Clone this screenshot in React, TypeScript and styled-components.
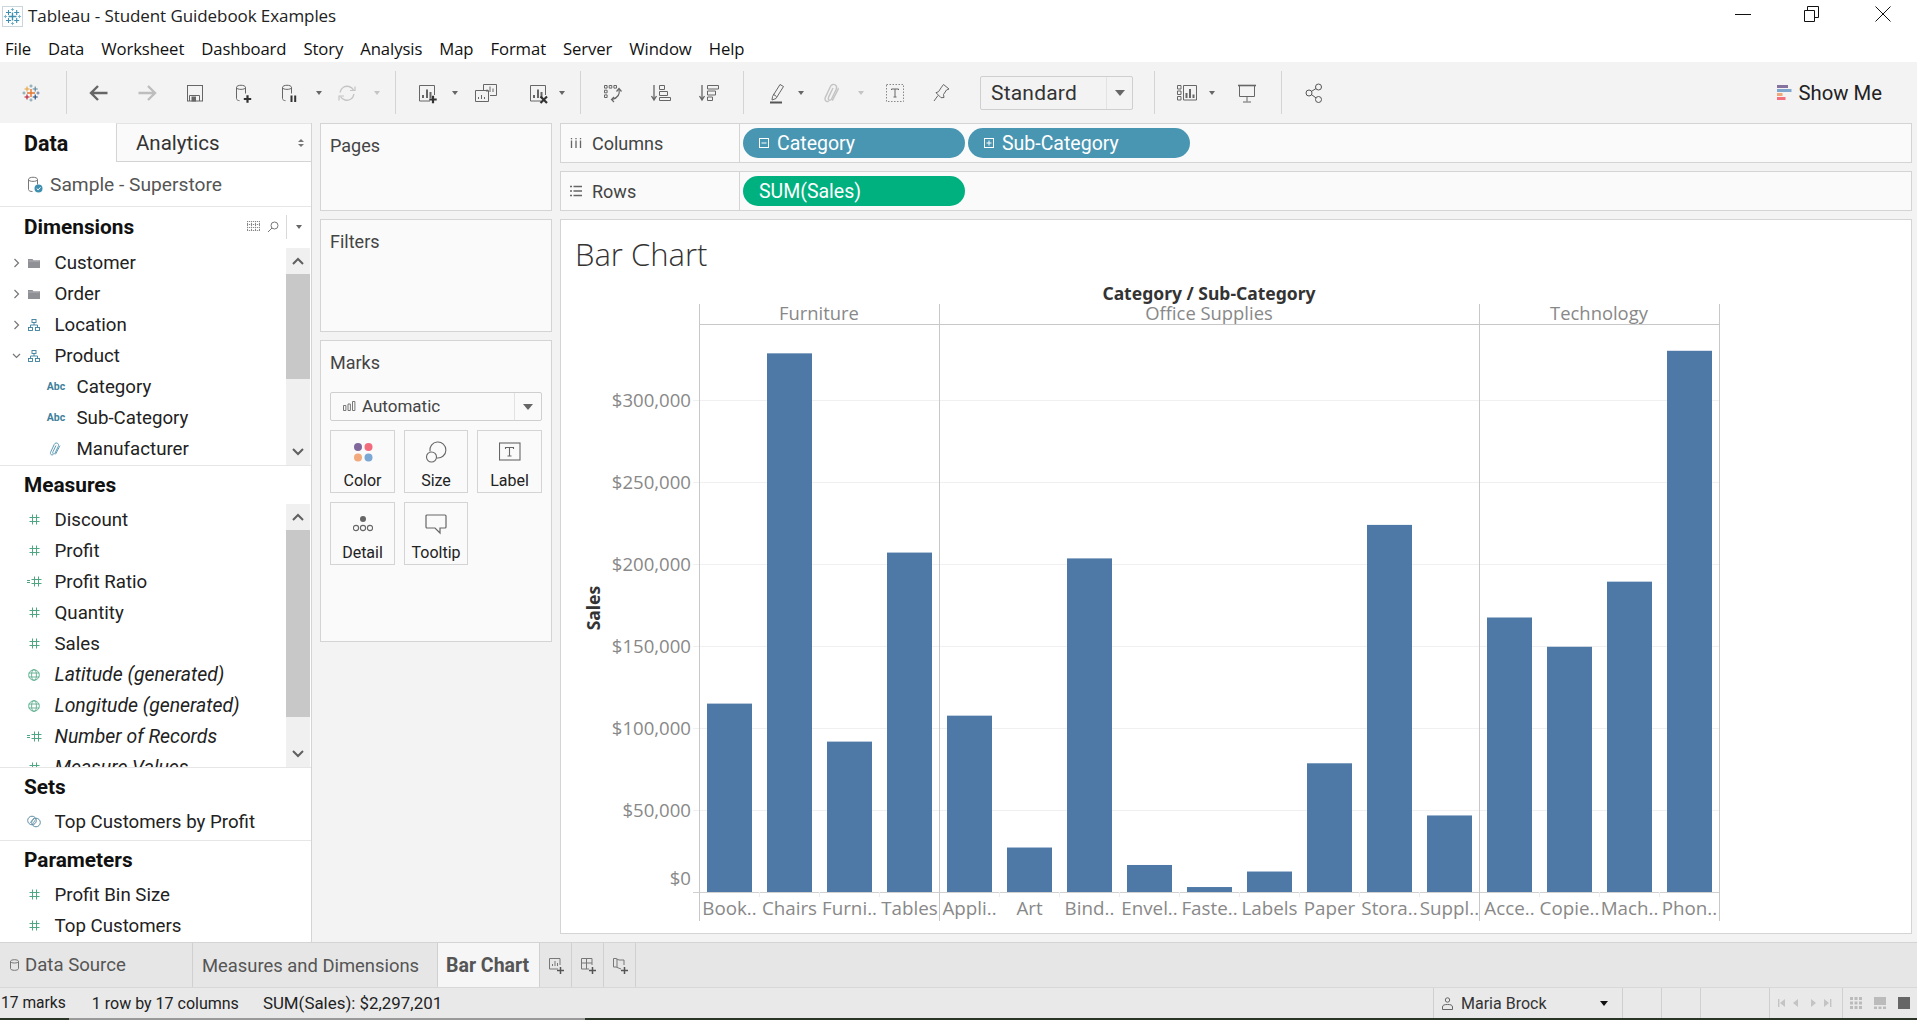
import React from "react";
import styled, { createGlobalStyle } from "styled-components";

const UI = `Roboto, "Liberation Sans", sans-serif`;

const Global = createGlobalStyle`
  html, body { margin: 0; padding: 0; background: #fff; overflow: hidden; }
  * { box-sizing: border-box; }
  #root { width: 1917px; height: 1020px; }
  body { font-family: ${UI}; color: #222; }
`;

const Page = styled.div`
  width: 1917px; height: 1020px; display: flex; flex-direction: column; background: #f3f3f3; overflow: hidden;
`;

/* ---------- title + menu ---------- */
const TitleBar = styled.div`
  height: 32px; background: #fff; display: flex; align-items: center; padding-left: 2px; flex: none;
`;
const TitleText = styled.span`
  font: 400 17px "Open Sans", sans-serif; color: #222; margin: -2px 0 0 5px; letter-spacing: -0.08px;
`;
const WinControls = styled.div`
  margin-left: auto; display: flex; align-items: center; margin-right: 25px; margin-top: -4px;
`;
const WinBtn = styled.svg<{ $gap: number }>`
  width: 18px; height: 18px; margin-left: ${(p) => p.$gap}px; display: block;
`;
const MenuBar = styled.div`
  height: 30px; background: #fff; display: flex; align-items: center; gap: 17px; padding-left: 5px; flex: none;
`;
const MenuItem = styled.span`
  font: 400 16.7px "Open Sans", sans-serif; color: #111; letter-spacing: -0.1px; margin-top: 2px;
`;

/* ---------- toolbar ---------- */
const Toolbar = styled.div`
  height: 61px; flex: none; display: flex; align-items: center; background: #f3f3f3;
`;
const Tool = styled.div<{ $gap: number; $w?: number }>`
  width: ${(p) => p.$w ?? 24}px; height: 24px; margin-left: ${(p) => p.$gap}px; flex: none;
  display: flex; align-items: center; justify-content: center;
`;
const ToolSep = styled.div<{ $gap: number }>`
  width: 1px; height: 43px; background: #d4d4d4; margin-left: ${(p) => p.$gap}px; flex: none;
`;
const Arrow = styled.div<{ $light?: boolean }>`
  width: 0; height: 0; border-left: 3.5px solid transparent; border-right: 3.5px solid transparent;
  border-top: 4px solid ${(p) => (p.$light ? "#c4c4c4" : "#666")};
`;
const FitSelect = styled.div<{ $gap: number }>`
  width: 153px; height: 34px; margin-left: ${(p) => p.$gap}px; border: 1px solid #cfcfcf; border-radius: 2px;
  display: flex; align-items: center; flex: none;
`;
const FitText = styled.span`
  flex: 1; padding-left: 10px; font: 400 21px ${UI}; color: #333; letter-spacing: 0.2px;
`;
const FitArrow = styled.div`
  width: 26px; height: 100%; border-left: 1px solid #e2e2e2; display: flex; align-items: center; justify-content: center;
`;
const BigArrow = styled.div`
  width: 0; height: 0; border-left: 5px solid transparent; border-right: 5px solid transparent; border-top: 6px solid #666;
`;
const ShowMe = styled.div`
  margin-left: auto; margin-right: 35px; display: flex; align-items: center; gap: 6px;
`;
const ShowMeText = styled.span`
  font: 400 20.3px ${UI}; color: #222;
`;

/* ---------- main ---------- */
const Main = styled.div`
  flex: 1; min-height: 0; display: flex;
`;
const Sidebar = styled.div`
  width: 312px; flex: none; background: #fff; border-right: 1px solid #d4d4d4; display: flex; flex-direction: column;
`;
const DataTabs = styled.div`
  height: 39px; display: flex; flex: none;
`;
const DataTab = styled.div`
  width: 116px; padding: 2px 0 0 24px; display: flex; align-items: center; font: 700 21.5px ${UI}; color: #111;
`;
const AnalyticsTab = styled.div`
  flex: 1; display: flex; align-items: center; padding: 1px 0 0 19px; background: #fafafa;
  border-left: 1px solid #d4d4d4; border-bottom: 1px solid #d4d4d4; border-top: 1px solid #e4e4e4;
  font: 400 20.5px ${UI}; color: #333;
`;
const TabSort = styled.span`
  margin-left: auto; margin-right: 7px; display: flex; flex-direction: column; gap: 2px;
`;
const TinyUp = styled.i`
  display: block; width: 0; height: 0; border-left: 3px solid transparent; border-right: 3px solid transparent; border-bottom: 3px solid #777;
`;
const TinyDown = styled.i`
  display: block; width: 0; height: 0; border-left: 3px solid transparent; border-right: 3px solid transparent; border-top: 3px solid #777;
`;
const SourceRow = styled.div`
  height: 45px; display: flex; align-items: center; padding: 0 0 0 27px; gap: 7px; flex: none;
  border-bottom: 1px solid #e6e6e6; font: 400 19.2px ${UI}; color: #555;
`;
const Section = styled.div<{ $h: number; $last?: boolean }>`
  height: ${(p) => p.$h}px; flex: none; display: flex; flex-direction: column;
  border-bottom: ${(p) => (p.$last ? "none" : "1px solid #e6e6e6")};
`;
const SectionHead = styled.div<{ $h: number; $lift?: number }>`
  height: ${(p) => p.$h}px; flex: none; display: flex; align-items: center; padding: 0 0 ${(p) => p.$lift ?? 0}px 24px;
  font: 700 20.8px ${UI}; color: #111;
`;
const HeadTools = styled.div`
  margin-left: auto; display: flex; align-items: center; height: 24px; margin-right: 0;
`;
const HeadIcon = styled.div`
  width: 20px; display: flex; justify-content: center;
`;
const HeadSep = styled.div`
  width: 1px; height: 24px; background: #d9d9d9; margin: 0 9px 0 3px;
`;
const HeadArrow = styled.div`
  width: 0; height: 0; border-left: 3.5px solid transparent; border-right: 3.5px solid transparent; border-top: 4px solid #666; margin-right: 9px;
`;
const ScrollArea = styled.div`
  flex: 1; min-height: 0; display: flex;
`;
const FieldList = styled.div`
  flex: 1; min-width: 0; overflow: hidden;
`;
const Field = styled.div<{ $indent: number; $lift?: number }>`
  height: 31px; display: flex; align-items: center; padding: 0 0 ${(p) => p.$lift ?? 0}px ${(p) => p.$indent}px; white-space: nowrap;
`;
const ChevSlot = styled.span`
  width: 12px; flex: none; display: flex; justify-content: center;
`;
const TypeSlot = styled.span`
  width: 24px; flex: none; display: flex; justify-content: center; align-items: center;
`;
const AbcIcon = styled.span`
  font: 700 10.5px ${UI}; color: #3d7f9c;
`;
const FieldText = styled.span<{ $italic?: boolean }>`
  margin-left: 8.5px; font: ${(p) => (p.$italic ? "italic 400 19.4px" : "normal 400 18.7px")} ${UI}; color: #222;
`;
const ScrollBar = styled.div`
  width: 24px; margin-right: 1px; flex: none; background: #f0f0f0; display: flex; flex-direction: column;
`;
const ScrollBtn = styled.div`
  height: 26px; flex: none; display: flex; align-items: center; justify-content: center;
`;
const Thumb = styled.div<{ $h: number }>`
  height: ${(p) => p.$h}px; background: #c8c8c8; flex: none;
`;
const ScrollEnd = styled(ScrollBtn)`
  margin-top: auto;
`;

const MidCol = styled.div`
  width: 232px; margin-left: 8px; flex: none; display: flex; flex-direction: column; gap: 8px;
`;
const Card = styled.div<{ $h: number }>`
  height: ${(p) => p.$h}px; flex: none; background: #fafafa; border: 1px solid #d4d4d4; padding: 11px 9px 0 9px;
`;
const CardTitle = styled.div`
  font: 400 18px ${UI}; color: #444; line-height: 22px;
`;
const MarkSelect = styled.div`
  height: 29px; margin-top: 18px; border: 1px solid #cfcfcf; border-radius: 2px; display: flex; align-items: center; background: #fafafa;
`;
const MarkSelectText = styled.span`
  flex: 1; display: flex; align-items: center; gap: 6px; padding: 0 0 1px 12px; font: 400 17px ${UI}; color: #444;
`;
const MarkArrow = styled.div`
  width: 27px; height: 100%; border-left: 1px solid #e2e2e2; display: flex; align-items: center; justify-content: center;
`;
const TileGrid = styled.div`
  margin-top: 9px; display: grid; grid-template-columns: 65px 64px 65px; grid-auto-rows: 63px; column-gap: 9px; row-gap: 9px;
`;
const Tile = styled.div`
  border: 1px solid #d4d4d4; display: flex; flex-direction: column; align-items: center; padding-top: 9px;
`;
const TileIcon = styled.div`
  height: 24px; display: flex; align-items: center; justify-content: center;
`;
const TileLabel = styled.div`
  margin-top: 7px; font: 400 16px ${UI}; color: #222;
`;

const RightCol = styled.div`
  width: 1352px; margin-left: 8px; flex: none; display: flex; flex-direction: column; gap: 8px; padding-bottom: 8px;
`;
const Shelf = styled.div`
  height: 40px; flex: none; background: #fafafa; border: 1px solid #d4d4d4; display: flex; align-items: center;
`;
const ShelfLabel = styled.div`
  width: 179px; height: 100%; flex: none; border-right: 1px solid #d4d4d4; display: flex; align-items: center; padding-left: 9px; gap: 10px;
  font: 400 18px ${UI}; color: #444;
`;
const ShelfPills = styled.div`
  display: flex; gap: 3px; margin-left: 3px;
`;
const Pill = styled.div<{ $color: string; $pad: number }>`
  width: 222px; height: 30px; border-radius: 15px; background: ${(p) => p.$color}; color: #fff; display: flex; align-items: center;
  padding-left: ${(p) => p.$pad}px; gap: 8px; font: 400 19.5px ${UI};
`;
const CanvasCard = styled.div`
  flex: 1; min-height: 0; background: #fff; border: 1px solid #d4d4d4; display: flex; flex-direction: column;
`;
const SheetTitle = styled.div`
  height: 52px; flex: none; padding: 16px 0 0 14px; display: flex; align-items: center; font: 300 31px "Open Sans", sans-serif; color: #333;
`;
const ChartSvg = styled.svg`
  display: block; flex: none;
`;
const AxisText = styled.text`
  font: 400 18.6px "Open Sans", sans-serif; fill: #888;
`;
const HeaderText = styled.text`
  font: 400 18.4px "Open Sans", sans-serif; fill: #888;
`;
const SubText = styled.text`
  font: 400 18.8px "Open Sans", sans-serif; fill: #888;
`;
const BoldText = styled.text`
  font: 700 17.5px "Noto Sans", sans-serif; fill: #333;
`;

/* ---------- bottom ---------- */
const TabBar = styled.div`
  height: 45px; flex: none; background: #e6e6e6; border-top: 1px solid #d4d4d4; display: flex;
`;
const SheetTab = styled.div<{ $w: number; $pad: number; $active?: boolean; $size: number }>`
  width: ${(p) => p.$w}px; flex: none; padding-left: ${(p) => p.$pad}px; display: flex; align-items: center; gap: 6px;
  border-right: 1px solid #d0d0d0; background: ${(p) => (p.$active ? "#f6f6f6" : "transparent")};
  font: ${(p) => (p.$active ? 700 : 400)} ${(p) => p.$size}px ${UI}; color: #555;
  white-space: nowrap;
`;
const AddTab = styled.div`
  width: 32px; flex: none; border-right: 1px solid #d0d0d0; display: flex; align-items: center; justify-content: center;
`;
const StatusBar = styled.div`
  height: 31px; flex: none; background: #e9e9e9; border-top: 1px solid #d8d8d8; display: flex; align-items: center; color: #222;
`;
const StatusItem = styled.span<{ $gap: number; $size: number }>`
  margin-left: ${(p) => p.$gap}px; font: 400 ${(p) => p.$size}px ${UI};
`;
const StatusRight = styled.div`
  margin-left: auto; display: flex; height: 100%;
`;
const StatusCell = styled.div<{ $w: number; $gap?: number }>`
  width: ${(p) => p.$w}px; border-left: 1px solid #d0d0d0; display: flex; align-items: center; justify-content: center; gap: ${(p) => p.$gap ?? 0}px;
`;
const UserCell = styled(StatusCell)`
  justify-content: flex-start; padding-left: 8px; gap: 8px;
  font: 400 16px ${UI}; color: #333;
`;
const UserArrow = styled.div`
  width: 0; height: 0; border-left: 4px solid transparent; border-right: 4px solid transparent; border-top: 5px solid #111; margin-left: auto; margin-right: 14px;
`;
const DeskStrip = styled.div`
  height: 2px; flex: none; display: flex;
`;
const DeskPart = styled.div<{ $w?: number; $c: string }>`
  ${(p) => (p.$w ? `width:${p.$w}px;` : "flex:1;")} background: ${(p) => p.$c};
`;

/* ---------- icons ---------- */
const Logo = ({ size = 24, colors }: { size?: number; colors?: string[] }) => {
  const c = colors ?? ["#e8762c", "#e8a03c", "#5b879b", "#b5172f", "#1f447a", "#7099a6", "#7099a6", "#5b6f9a"];
  const cross = (x: number, y: number, r: number, col: string, w: number) => (
    <path d={`M${x - r} ${y}H${x + r}M${x} ${y - r}V${y + r}`} stroke={col} strokeWidth={w} fill="none" />
  );
  return (
    <svg width={size} height={size} viewBox="0 0 24 24">
      {cross(12, 12, 4, c[0], 1.4)}
      {cross(8, 8, 2.5, c[1], 1.1)}
      {cross(16.2, 8, 2.5, c[2], 1.1)}
      {cross(8, 16, 2.5, c[3], 1.1)}
      {cross(16.2, 16, 2.5, c[4], 1.1)}
      {cross(12, 5, 1.6, c[5], 0.9)}
      {cross(12, 19, 1.6, c[6], 0.9)}
      {cross(5, 12, 1.6, c[6], 0.9)}
      {cross(19, 12, 1.6, c[7], 0.9)}
    </svg>
  );
};
const S = ({ children, w = 24, h = 24 }: { children: React.ReactNode; w?: number; h?: number }) => (
  <svg width={w} height={h} viewBox={`0 0 ${w} ${h}`} fill="none" stroke="#666" strokeWidth={1}>
    {children}
  </svg>
);
const Cyl = ({ c = "#666" }: { c?: string }) => (
  <g stroke={c}>
    <path d="M5.5 6.5c0-3 9-3 9 0v6M5.5 6.5c0 2.5 9 2.5 9 0M5.5 6.5v11c0 1.4 1.5 2 3 2.2" />
  </g>
);
const Plus = ({ x, y, r = 3.7 }: { x: number; y: number; r?: number }) => (
  <path d={`M${x - r} ${y}H${x + r}M${x} ${y - r}V${y + r}`} stroke="#333" strokeWidth={2.2} />
);
const BarsBox = () => (
  <g>
    <path d="M15 20H4.5V4.5h15V14" />
    <path d="M8 17v-3M12 17V8.5M15.5 17v-6" strokeWidth={2} />
  </g>
);
const Hash = () => (
  <svg width="11" height="11" viewBox="0 0 11 11" stroke="#4fa683" strokeWidth="1" fill="none">
    <path d="M0.5 3.5H10.5M0.5 7.5H10.5M3.5 0.5V10.5M7.5 0.5V10.5" />
  </svg>
);
const CalcHash = () => (
  <svg width="15" height="11" viewBox="0 0 15 11" stroke="#4fa683" strokeWidth="1" fill="none">
    <path d="M0 4.5H3M0 6.5H3M4.5 3.5H14.5M4.5 7.5H14.5M7.5 0.5V10.5M11.5 0.5V10.5" />
  </svg>
);
const Globe = () => (
  <svg width="12" height="12" viewBox="0 0 12 12" stroke="#5cae8d" strokeWidth="0.9" fill="none">
    <circle cx="6" cy="6" r="5.3" />
    <ellipse cx="6" cy="6" rx="2.4" ry="5.3" />
    <path d="M0.7 4H11.3M0.7 8H11.3" />
  </svg>
);
const Folder = () => (
  <svg width="12" height="10" viewBox="0 0 12 10">
    <path d="M0 1h4.5l1 1.2H12V10H0Z" fill="#8f8f96" />
    <path d="M0.5 3h11" stroke="#c9c9cc" strokeWidth="0.6" />
  </svg>
);
const Hier = () => (
  <svg width="12" height="12" viewBox="0 0 12 12" stroke="#3d7f9c" strokeWidth="0.9" fill="none">
    <rect x="4" y="0.5" width="4" height="3" />
    <rect x="0.5" y="8.5" width="4" height="3" />
    <rect x="7.5" y="8.5" width="4" height="3" />
    <path d="M6 3.5V6M2.5 8.5V6H9.5V8.5" />
  </svg>
);
const Clip = ({ c = "#5e9bb5", s = 14 }: { c?: string; s?: number }) => (
  <svg width={s} height={s} viewBox="0 0 14 14" stroke={c} strokeWidth="1" fill="none">
    <path d="M4 12.8c-1.8.6-3-.8-2.5-2.4L5.3 2.3C6 .8 7.8.7 8.7 1.4c1 .8 1 2 .5 3.1L6 11.2c-.5 1-1.6 1-2 .5-.4-.4-.4-1 0-2l3-6.2" />
    <path d="M6.5 12.3l3.6-7c.5-1 .7-1.6.9-1.7" />
  </svg>
);
const SetIcon = () => (
  <svg width="14" height="13" viewBox="0 0 14 13" stroke="#5e8ea6" strokeWidth="1" fill="none">
    <circle cx="5" cy="5.5" r="4.3" />
    <circle cx="9" cy="7.5" r="4.3" />
    <path d="M3 8l4-5M5.5 9.5l3-5" strokeWidth="0.8" />
  </svg>
);
const ChevR = () => (
  <svg width="7" height="10" viewBox="0 0 7 10" fill="none" stroke="#777" strokeWidth="1.2">
    <path d="M1.5 1l4 4-4 4" />
  </svg>
);
const ChevD = () => (
  <svg width="9" height="6" viewBox="0 0 9 6" fill="none" stroke="#777" strokeWidth="1.2">
    <path d="M1 1l3.5 3.5L8 1" />
  </svg>
);
const ScrollUp = () => (
  <svg width="12" height="8" viewBox="0 0 12 8" fill="none" stroke="#606060" strokeWidth="2">
    <path d="M1 7l5-5 5 5" />
  </svg>
);
const ScrollDown = () => (
  <svg width="12" height="8" viewBox="0 0 12 8" fill="none" stroke="#606060" strokeWidth="2">
    <path d="M1 1l5 5 5-5" />
  </svg>
);
const AddIcon = ({ kind }: { kind: "sheet" | "dash" | "story" }) => (
  <svg width="18" height="18" viewBox="0 0 18 18" fill="none" stroke="#777" strokeWidth="1">
    {kind === "sheet" && <path d="M11 13H2.5V2.5H13V9M5.5 10V8M8 10V5M10.5 10V7" />}
    {kind === "dash" && <path d="M10 13H2.5V2.5H13V9M2.5 7H13M7.5 2.5V13" />}
    {kind === "story" && <path d="M10 13L5 11H2.5V2.5H5L8 4H13V9M6 3V11" />}
    <path d="M10 14.5H17M13.5 11V18" stroke="#555" strokeWidth="1.5" />
  </svg>
);

type F = { name: string; icon: React.ReactNode; italic?: boolean; chev?: "r" | "d"; child?: boolean };
const dims: F[] = [
  { name: "Customer", icon: <Folder />, chev: "r" },
  { name: "Order", icon: <Folder />, chev: "r" },
  { name: "Location", icon: <Hier />, chev: "r" },
  { name: "Product", icon: <Hier />, chev: "d" },
  { name: "Category", icon: <AbcIcon>Abc</AbcIcon>, child: true },
  { name: "Sub-Category", icon: <AbcIcon>Abc</AbcIcon>, child: true },
  { name: "Manufacturer", icon: <Clip />, child: true },
];
const meas: F[] = [
  { name: "Discount", icon: <Hash /> },
  { name: "Profit", icon: <Hash /> },
  { name: "Profit Ratio", icon: <CalcHash /> },
  { name: "Quantity", icon: <Hash /> },
  { name: "Sales", icon: <Hash /> },
  { name: "Latitude (generated)", icon: <Globe />, italic: true },
  { name: "Longitude (generated)", icon: <Globe />, italic: true },
  { name: "Number of Records", icon: <CalcHash />, italic: true },
  { name: "Measure Values", icon: <Hash />, italic: true },
];

const FieldRow = ({ f, lift }: { f: F; lift?: number }) => (
  <Field $indent={f.child ? 44 : 10} $lift={lift}>
    {!f.child && <ChevSlot>{f.chev === "r" ? <ChevR /> : f.chev === "d" ? <ChevD /> : null}</ChevSlot>}
    <TypeSlot>{f.icon}</TypeSlot>
    <FieldText $italic={f.italic}>{f.name}</FieldText>
  </Field>
);

const bars = [
  ["Book..", 114880], ["Chairs", 328449], ["Furni..", 91705], ["Tables", 206966],
  ["Appli..", 107532], ["Art", 27119], ["Bind..", 203413], ["Envel..", 16476], ["Faste..", 3024],
  ["Labels", 12486], ["Paper", 78479], ["Stora..", 223844], ["Suppl..", 46674],
  ["Acce..", 167380], ["Copie..", 149528], ["Mach..", 189239], ["Phon..", 330007],
] as [string, number][];
const X0 = 699.5;
const BASE = 892;
const ticks = [300000, 250000, 200000, 150000, 100000, 50000, 0];
const money = (v: number) => "$" + v.toLocaleString("en-US");

const Chart = () => (
  <ChartSvg width={1350} height={661} viewBox="561 272 1350 661">
    {ticks.map((t) => {
      const y = Math.round(BASE - t * 0.00164) + 0.5;
      return (
        <g key={t}>
          <line x1={693} x2={1719} y1={y} y2={y} stroke={t === 0 ? "#d0d0d0" : "#f0f0f0"} />
          <AxisText x={691} y={t === 0 ? 885 : y + 6} textAnchor="end">{money(t)}</AxisText>
        </g>
      );
    })}
    <line x1={699} x2={1720} y1={324.5} y2={324.5} stroke="#c8c8c8" />
    {bars.map((_, i) => (
      <line key={i} x1={X0 + 60 * i + 60} x2={X0 + 60 * i + 60} y1={892} y2={897} stroke="#ececec" />
    ))}
    {bars.map(([n, v], i) => (
      <g key={n}>
        <rect x={X0 + 7.5 + i * 60} width={45} y={BASE - v * 0.00164} height={v * 0.00164} fill="#4e79a7" />
        <SubText x={X0 + 30 + i * 60} y={915} textAnchor="middle">{n}</SubText>
      </g>
    ))}
    {[699.5, 939.5, 1479.5, 1719.5].map((x) => (
      <line key={x} x1={x} x2={x} y1={304} y2={921} stroke="#c8c8c8" />
    ))}
    <HeaderText x={819} y={320} textAnchor="middle">Furniture</HeaderText>
    <HeaderText x={1209} y={320} textAnchor="middle">Office Supplies</HeaderText>
    <HeaderText x={1599} y={320} textAnchor="middle">Technology</HeaderText>
    <BoldText x={1209} y={300} textAnchor="middle">Category / Sub-Category</BoldText>
    <BoldText textAnchor="middle" transform="translate(600 608) rotate(-90)">Sales</BoldText>
  </ChartSvg>
);

export default function App() {
  return (
    <Page>
      <Global />
      <TitleBar>
        <svg width="21" height="21" viewBox="0 0 21 21">
          <rect x="0.5" y="0.5" width="20" height="20" fill="#fff" stroke="#c9d6dc" />
          <g transform="translate(-1.5 -1.5)">
            <Logo colors={["#3f8fb0", "#3f8fb0", "#3f8fb0", "#3f8fb0", "#3f8fb0", "#6fb0c9", "#6fb0c9", "#6fb0c9"]} />
          </g>
        </svg>
        <TitleText>Tableau - Student Guidebook Examples</TitleText>
        <WinControls>
          <WinBtn $gap={0} viewBox="0 0 18 18" fill="none" stroke="#111"><path d="M1 9.5H17" /></WinBtn>
          <WinBtn $gap={50} viewBox="0 0 18 18" fill="none" stroke="#111"><path d="M2.5 5.5h10v11h-10z" /><path d="M5.5 5V1.5h11v11H13" /></WinBtn>
          <WinBtn $gap={54} viewBox="0 0 18 18" fill="none" stroke="#111"><path d="M1.5 1.5l15 15M16.5 1.5l-15 15" /></WinBtn>
        </WinControls>
      </TitleBar>
      <MenuBar>
        {["File", "Data", "Worksheet", "Dashboard", "Story", "Analysis", "Map", "Format", "Server", "Window", "Help"].map((m) => (
          <MenuItem key={m}>{m}</MenuItem>
        ))}
      </MenuBar>

      <Toolbar>
        <Tool $gap={19}><Logo /></Tool>
        <ToolSep $gap={23} />
        <Tool $gap={20}><S><path d="M20.5 12H4M11 5l-7 7 7 7" stroke="#666" strokeWidth={2.4} /></S></Tool>
        <Tool $gap={24}><S><path d="M3.5 12H20M13 5l7 7-7 7" stroke="#bdbdbd" strokeWidth={2.4} /></S></Tool>
        <Tool $gap={24}><S><rect x="4.5" y="4.5" width="15" height="15.5" /><path d="M6.5 20v-5.5h10V20" /><rect x="9" y="16" width="3.5" height="4" fill="#666" /></S></Tool>
        <Tool $gap={24}><S><Cyl /><Plus x={16.5} y={18} /></S></Tool>
        <Tool $gap={22}><S><Cyl /><path d="M14.5 14.5V21M18.2 14.5V21" stroke="#333" strokeWidth={2} /></S></Tool>
        <Tool $gap={14} $w={8}><Arrow /></Tool>
        <Tool $gap={12}><S><path d="M5 11.5C6 6.5 10 4.5 14 5.5c2 .5 3.5 1.5 4.5 3.5M19 13c-1 5-5 7-9 6-2-.5-3.5-1.5-4.5-3.5" stroke="#c4c4c4" strokeWidth={1.3} /><path d="M15 9.5h5v-4M9 15H4v4.5" stroke="#c4c4c4" strokeWidth={1.2} /></S></Tool>
        <Tool $gap={14} $w={8}><Arrow $light /></Tool>
        <ToolSep $gap={14} />
        <Tool $gap={19}><S><BarsBox /><Plus x={18} y={18.5} /></S></Tool>
        <Tool $gap={12} $w={8}><Arrow /></Tool>
        <Tool $gap={15}><S><path d="M9.5 9V3.5h13v11H16" /><path d="M13 11V8.5M16 11V5.5M19 11V7.5" /><path d="M1.5 9.5h13v11h-13zM4.5 18v-2M7.5 18v-4M10.5 18v-2" /></S></Tool>
        <Tool $gap={28}><S><BarsBox /><path d="M14.5 15.5l6.5 6.5M21 15.5L14.5 22" stroke="#333" strokeWidth={2.2} /></S></Tool>
        <Tool $gap={8} $w={8}><Arrow /></Tool>
        <ToolSep $gap={14} />
        <Tool $gap={19}><S><path d="M4.5 4.5h2.6v2.6H4.5zM9.2 4.5h2.6v2.6H9.2zM13.9 4.5h2.6v2.6h-2.6zM4.5 9.2h2.6v2.6H4.5zM4.5 13.9h2.6v2.6H4.5z" /><path d="M19 8c1 5-1 9-7 10.5" strokeWidth={1.2} /><path d="M16.5 10.5L19 7.5l2.5 3M14 16l-2.5 2.5 2.5 2.5" strokeWidth={1.2} /></S></Tool>
        <Tool $gap={24}><S><path d="M6 4v14M3.5 15l2.5 4 2.5-4" strokeWidth={1.3} /><path d="M11.5 4.5h5v4h-5zM11.5 10.5h8v4h-8zM11.5 16.5h11v3h-11z" /></S></Tool>
        <Tool $gap={24}><S><path d="M6 4v14M3.5 15l2.5 4 2.5-4" strokeWidth={1.3} /><path d="M11.5 4.5h11v3.5h-11zM11.5 10h8v4h-8zM11.5 16h5v3.5h-5z" /></S></Tool>
        <ToolSep $gap={23} />
        <Tool $gap={20}><S><path d="M8.5 15.5L16 3.5l3.5 2-7.5 12-4 1.5z" strokeWidth={1} /><path d="M9 13l3.5 2.5" /><path d="M6 21.5h12" stroke="#555" strokeWidth={2} /></S></Tool>
        <Tool $gap={9} $w={8}><Arrow /></Tool>
        <Tool $gap={16}><Clip c="#c4c4c4" s={20} /></Tool>
        <Tool $gap={12} $w={8}><Arrow $light /></Tool>
        <Tool $gap={18}><S><rect x="3.5" y="3.5" width="17" height="17" strokeDasharray="1.5 1.5" stroke="#888" /><path d="M8.5 9V8h7v1M12 8v8M10.5 16h3" strokeWidth={1} /></S></Tool>
        <Tool $gap={22}><S><path d="M14.5 3.5l5.5 4.5-2.5 1-3 4.5.5 3-3 .2-5-5 2.5-1 3-4.5z" /><path d="M9 14.5L5 20" /></S></Tool>
        <FitSelect $gap={27}>
          <FitText>Standard</FitText>
          <FitArrow><BigArrow /></FitArrow>
        </FitSelect>
        <ToolSep $gap={21} />
        <Tool $gap={20}><S><path d="M2.5 4.5h3.5v3.5H2.5zM2.5 10h3.5v3.5H2.5zM2.5 15.5h3.5V19H2.5zM8.5 4.5h13V19h-13z" /><path d="M11.5 17v-5M15 17V8M18.5 17v-3.5" strokeWidth={2} /></S></Tool>
        <Tool $gap={9} $w={8}><Arrow /></Tool>
        <Tool $gap={19}><S><path d="M3 4.5h18" strokeWidth={1.6} /><path d="M4.5 4.5v11h15v-11M12 15.5v5M8 21h8" /></S></Tool>
        <ToolSep $gap={22} />
        <Tool $gap={20}><S><circle cx="7" cy="12" r="3" stroke="#555" /><circle cx="16.5" cy="6" r="3" stroke="#555" /><circle cx="16.5" cy="18.5" r="3" stroke="#555" /><path d="M9.5 10.4L14 7.5M9.5 13.6l4.5 3.3" stroke="#555" /></S></Tool>
        <ShowMe>
          <svg width="15" height="16" viewBox="0 0 15 16">
            <rect x="0" y="0" width="11" height="3" fill="#85729e" />
            <rect x="0" y="4" width="14.5" height="3" fill="#7ea6cf" />
            <rect x="0" y="8" width="5.5" height="3" fill="#f0a878" />
            <rect x="0" y="12" width="8.5" height="3" fill="#f4707f" />
          </svg>
          <ShowMeText>Show Me</ShowMeText>
        </ShowMe>
      </Toolbar>

      <Main>
        <Sidebar>
          <DataTabs>
            <DataTab>Data</DataTab>
            <AnalyticsTab>
              Analytics
              <TabSort><TinyUp /><TinyDown /></TabSort>
            </AnalyticsTab>
          </DataTabs>
          <SourceRow>
            <svg width="16" height="17" viewBox="0 0 16 17" fill="none" stroke="#777">
              <path d="M1.5 3.5c0-3 9-3 9 0v5M1.5 3.5c0 2.5 9 2.5 9 0M1.5 3.5v10c0 1.4 2 2 4 2" />
              <circle cx="11.5" cy="12.5" r="4" fill="#3f8fb0" stroke="none" />
              <path d="M9.7 12.5l1.4 1.4 2.4-2.6" stroke="#fff" />
            </svg>
            Sample - Superstore
          </SourceRow>
          <Section $h={259}>
            <SectionHead $h={41} $lift={2}>
              Dimensions
              <HeadTools>
                <HeadIcon>
                  <svg width="13" height="11" viewBox="0 0 13 11" stroke="#888" fill="none"><path d="M0 .5h13M0 3.5h13M0 6.5h13M0 9.5h13M.5 0v10M4.5 0v10M8.5 0v10M12.5 0v10" strokeDasharray="1.2 .8" /></svg>
                </HeadIcon>
                <HeadIcon>
                  <svg width="12" height="12" viewBox="0 0 12 12" stroke="#777" fill="none"><circle cx="7.5" cy="4.5" r="3.5" /><path d="M5 7L1 11" /></svg>
                </HeadIcon>
                <HeadSep />
                <HeadArrow />
              </HeadTools>
            </SectionHead>
            <ScrollArea>
              <FieldList>{dims.map((f) => <FieldRow key={f.name} f={f} lift={2} />)}</FieldList>
              <ScrollBar>
                <ScrollBtn><ScrollUp /></ScrollBtn>
                <Thumb $h={105} />
                <ScrollEnd><ScrollDown /></ScrollEnd>
              </ScrollBar>
            </ScrollArea>
          </Section>
          <Section $h={302}>
            <SectionHead $h={38}>Measures</SectionHead>
            <ScrollArea>
              <FieldList>{meas.map((f) => <FieldRow key={f.name} f={f} />)}</FieldList>
              <ScrollBar>
                <ScrollBtn><ScrollUp /></ScrollBtn>
                <Thumb $h={187} />
                <ScrollEnd><ScrollDown /></ScrollEnd>
              </ScrollBar>
            </ScrollArea>
          </Section>
          <Section $h={73}>
            <SectionHead $h={38}>Sets</SectionHead>
            <FieldRow f={{ name: "Top Customers by Profit", icon: <SetIcon /> }} />
          </Section>
          <Section $h={100} $last>
            <SectionHead $h={38}>Parameters</SectionHead>
            <FieldRow f={{ name: "Profit Bin Size", icon: <Hash /> }} />
            <FieldRow f={{ name: "Top Customers", icon: <Hash /> }} />
          </Section>
        </Sidebar>

        <MidCol>
          <Card $h={88}><CardTitle>Pages</CardTitle></Card>
          <Card $h={113}><CardTitle>Filters</CardTitle></Card>
          <Card $h={302}>
            <CardTitle>Marks</CardTitle>
            <MarkSelect>
              <MarkSelectText>
                <svg width="13" height="10" viewBox="0 0 13 10" fill="none" stroke="#777">
                  <path d="M.5 4.5h2.4v5H.5zM5 3h2.4v6.5H5zM9.5.5h2.4v9H9.5z" />
                </svg>
                Automatic
              </MarkSelectText>
              <MarkArrow><BigArrow /></MarkArrow>
            </MarkSelect>
            <TileGrid>
              <Tile>
                <TileIcon>
                  <svg width="20" height="20" viewBox="0 0 20 20">
                    <circle cx="5" cy="5" r="4" fill="#80679c" /><circle cx="15.5" cy="5" r="4" fill="#f16b7c" />
                    <circle cx="5" cy="15.5" r="4" fill="#f2a97c" /><circle cx="15.5" cy="15.5" r="4" fill="#7ba7d4" />
                  </svg>
                </TileIcon>
                <TileLabel>Color</TileLabel>
              </Tile>
              <Tile>
                <TileIcon>
                  <svg width="22" height="22" viewBox="0 0 22 22" fill="none" stroke="#666" strokeWidth="1.1">
                    <path d="M5 10.5A8 8 0 1 1 12 17" /><circle cx="6.5" cy="16" r="5" />
                  </svg>
                </TileIcon>
                <TileLabel>Size</TileLabel>
              </Tile>
              <Tile>
                <TileIcon>
                  <svg width="22" height="20" viewBox="0 0 22 20" fill="none" stroke="#666" strokeWidth="1.1">
                    <rect x="0.5" y="1" width="20.5" height="17" /><path d="M6.5 7V5.5h8V7M10.5 5.5V14M8.5 14h4" />
                  </svg>
                </TileIcon>
                <TileLabel>Label</TileLabel>
              </Tile>
              <Tile>
                <TileIcon>
                  <svg width="20" height="18" viewBox="0 0 20 18" fill="none" stroke="#666" strokeWidth="1.1">
                    <circle cx="10" cy="4" r="3" fill="#666" stroke="none" />
                    <circle cx="3" cy="13" r="2.6" /><circle cx="10" cy="13" r="2.6" /><circle cx="17" cy="13" r="2.6" />
                  </svg>
                </TileIcon>
                <TileLabel>Detail</TileLabel>
              </Tile>
              <Tile>
                <TileIcon>
                  <svg width="22" height="21" viewBox="0 0 22 21" fill="none" stroke="#666" strokeWidth="1.2">
                    <path d="M2 1h18a1 1 0 0 1 1 1v11a1 1 0 0 1-1 1h-5v5l-5-5H2a1 1 0 0 1-1-1V2a1 1 0 0 1 1-1z" />
                  </svg>
                </TileIcon>
                <TileLabel>Tooltip</TileLabel>
              </Tile>
            </TileGrid>
          </Card>
        </MidCol>

        <RightCol>
          <Shelf>
            <ShelfLabel>
              <svg width="12" height="12" viewBox="0 0 12 12" stroke="#666" fill="none" strokeWidth="1.3"><path d="M1.5 3.5V11M6 3.5V11M10.5 3.5V11M1.5 1V2.2M6 1V2.2M10.5 1V2.2" /></svg>
              Columns
            </ShelfLabel>
            <ShelfPills>
              <Pill $color="#4996b2" $pad={16}>
                <svg width="10" height="10" viewBox="0 0 10 10" fill="none" stroke="#fff"><rect x=".5" y=".5" width="9" height="9" /><path d="M2.5 5h5" /></svg>
                Category
              </Pill>
              <Pill $color="#4996b2" $pad={16}>
                <svg width="10" height="10" viewBox="0 0 10 10" fill="none" stroke="#fff"><rect x=".5" y=".5" width="9" height="9" /><path d="M2.5 5h5M5 2.5v5" /></svg>
                Sub-Category
              </Pill>
            </ShelfPills>
          </Shelf>
          <Shelf>
            <ShelfLabel>
              <svg width="12" height="12" viewBox="0 0 12 12" stroke="#666" fill="none" strokeWidth="1.3"><path d="M3.5 1.5H12M3.5 6H12M3.5 10.5H12M0 1.5H2M0 6H2M0 10.5H2" /></svg>
              Rows
            </ShelfLabel>
            <ShelfPills>
              <Pill $color="#00b180" $pad={16}>SUM(Sales)</Pill>
            </ShelfPills>
          </Shelf>
          <CanvasCard>
            <SheetTitle>Bar Chart</SheetTitle>
            <Chart />
          </CanvasCard>
        </RightCol>
      </Main>

      <TabBar>
        <SheetTab $w={193} $pad={10} $size={18.6}>
          <svg width="9" height="12" viewBox="0 0 9 12" fill="none" stroke="#777"><path d="M.5 2.5c0-2.4 8-2.4 8 0v7c0 2.4-8 2.4-8 0zM.5 2.5c0 2 8 2 8 0" /></svg>
          Data Source
        </SheetTab>
        <SheetTab $w={245} $pad={9} $size={18.4}>Measures and Dimensions</SheetTab>
        <SheetTab $w={102} $pad={8} $active $size={19.5}>Bar Chart</SheetTab>
        <AddTab><AddIcon kind="sheet" /></AddTab>
        <AddTab><AddIcon kind="dash" /></AddTab>
        <AddTab><AddIcon kind="story" /></AddTab>
      </TabBar>
      <StatusBar>
        <StatusItem $gap={1} $size={15.6}>17 marks</StatusItem>
        <StatusItem $gap={26} $size={16}>1 row by 17 columns</StatusItem>
        <StatusItem $gap={24} $size={16.9}>SUM(Sales): $2,297,201</StatusItem>
        <StatusRight>
          <UserCell $w={189}>
            <svg width="11" height="13" viewBox="0 0 11 13" fill="none" stroke="#666"><circle cx="5.5" cy="3" r="2.2" /><path d="M.5 12.5V10c0-2 2-2.5 5-2.5s5 .5 5 2.5v2.5z" /></svg>
            Maria Brock
            <UserArrow />
          </UserCell>
          <StatusCell $w={39} />
          <StatusCell $w={39} />
          <StatusCell $w={69} />
          <StatusCell $w={73}>
            <svg width="56" height="8" viewBox="0 0 56 8" fill="#c4c4c4">
              <path d="M0 0h1.4v8H0zM7 0v8L2 4zM20 0v8l-5-4zM33 0v8l5-4zM46 0v8l5-4zM52 0h1.4v8H52z" />
            </svg>
          </StatusCell>
          <StatusCell $w={75} $gap={12}>
            <svg width="12" height="12" viewBox="0 0 12 12" fill="#bbb"><path d="M0 0h3v3H0zM4.5 0h3v3h-3zM9 0h3v3H9zM0 4.5h3v3H0zM4.5 4.5h3v3h-3zM9 4.5h3v3H9zM0 9h3v3H0zM4.5 9h3v3h-3zM9 9h3v3H9z" /></svg>
            <svg width="12" height="12" viewBox="0 0 12 12" fill="#bbb"><path d="M0 0h12v8H0zM0 9.5h3V12H0zM4.5 9.5h3V12h-3zM9 9.5h3V12H9z" /></svg>
            <svg width="12" height="12" viewBox="0 0 12 12" fill="#666"><rect width="12" height="12" /></svg>
          </StatusCell>
        </StatusRight>
      </StatusBar>
      <DeskStrip>
        <DeskPart $w={69} $c="#2a3528" />
        <DeskPart $w={516} $c="#9a9a9a" />
        <DeskPart $c="#2a3528" />
      </DeskStrip>
    </Page>
  );
}
